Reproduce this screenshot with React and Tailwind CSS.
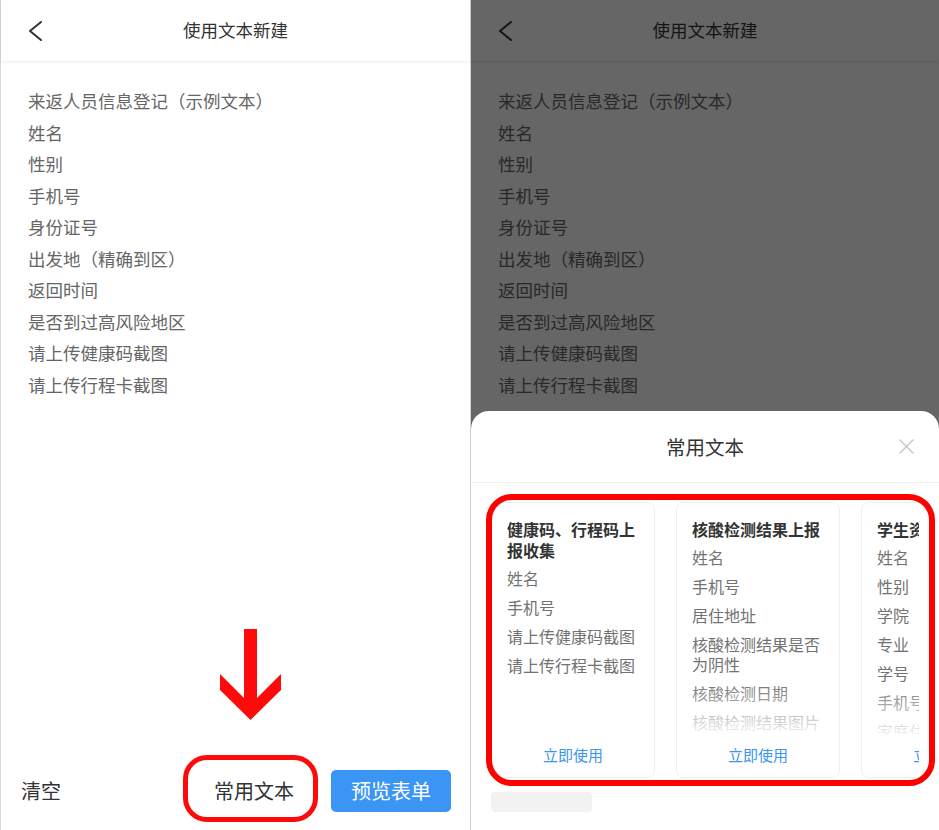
const FIELDS = [
  "来返人员信息登记（示例文本）",
  "姓名",
  "性别",
  "手机号",
  "身份证号",
  "出发地（精确到区）",
  "返回时间",
  "是否到过高风险地区",
  "请上传健康码截图",
  "请上传行程卡截图",
];

const TEMPLATES = [
  {
    title: "健康码、行程码上报收集",
    items: ["姓名", "手机号", "请上传健康码截图", "请上传行程卡截图"],
  },
  {
    title: "核酸检测结果上报",
    items: ["姓名", "手机号", "居住地址", "核酸检测结果是否为阴性", "核酸检测日期", "核酸检测结果图片"],
  },
  {
    title: "学生资料收集",
    items: ["姓名", "性别", "学院", "专业", "学号", "手机号", "家庭住址"],
  },
];

const Chevron = () => (
  <svg width="16" height="22" viewBox="0 0 16 22" fill="none">
    <path d="M14 2 L3 11 L14 20" stroke="#333" strokeWidth="2" strokeLinecap="round" strokeLinejoin="round" />
  </svg>
);

const CloseIcon = () => (
  <svg width="15" height="15" viewBox="0 0 15 15" fill="none">
    <path d="M1 1 L14 14 M14 1 L1 14" stroke="#c8c8c8" strokeWidth="1.5" strokeLinecap="round" />
  </svg>
);

const RedArrow = () => (
  <svg width="61" height="91" viewBox="0 0 61 91">
    <polygon points="24,0 37,0 37,69 61,45 61,61 30.5,91 0,61 0,45 24,69" fill="#ff0a0a" />
  </svg>
);

const PhonePage = () => (
  <div className="flex flex-col h-full">
    <div className="h-[61px] grid grid-cols-[1fr_auto_1fr] items-center shadow-[0_1px_3px_rgba(0,0,0,0.09)] bg-white">
      <div className="pl-[26px]">
        <Chevron />
      </div>
      <div className="text-[17.5px] text-[#333]">使用文本新建</div>
      <div />
    </div>
    <div className="flex-1 pt-[24px] pl-[27px] text-[17.5px] leading-[31.5px] text-[#666]">
      {FIELDS.map((f) => (
        <div key={f}>{f}</div>
      ))}
    </div>
    <div className="h-[78px] flex items-center pl-[20px] pr-[19px]">
      <span className="text-[20px] text-[#333]">清空</span>
      <span className="ml-auto mr-[37px] text-[20px] text-[#333]">常用文本</span>
      <button className="w-[120px] h-[42px] rounded-[5px] bg-[#3a95f5] text-white text-[20px]">
        预览表单
      </button>
    </div>
  </div>
);

const TemplateCard = ({ tpl }) => (
  <div className="shrink-0 w-[164px] h-[276px] border border-[#eee] rounded-[7px] bg-white flex flex-col pt-4 px-[15px] pb-3">
    <div className="text-[16px] leading-[21px] font-bold text-[#333] mb-[7px]">{tpl.title}</div>
    <div className="flex-1 min-h-0 overflow-hidden relative">
      <div className="flex flex-col gap-[9px]">
        {tpl.items.map((it) => (
          <div key={it} className="text-[16px] leading-[20px] text-[#727272]">
            {it}
          </div>
        ))}
      </div>
      <div className="absolute left-0 right-0 bottom-0 h-[52px] bg-gradient-to-b from-white/0 to-white/90" />
    </div>
    <div className="mt-[11px] text-center text-[15px] leading-[20px] text-[#3a95f5]">立即使用</div>
  </div>
);

export default function App() {
  return (
    <div className="flex w-[939px] h-[830px] overflow-hidden bg-white font-['Noto_Sans_CJK_SC','Noto_Sans',sans-serif]">
      {/* left: editor page */}
      <div className="relative w-[470px] h-full border-l border-[#d8d8d8]">
        <PhonePage />
        <div className="absolute left-[219px] top-[629px]">
          <RedArrow />
        </div>
        <div className="absolute left-[182px] top-[755px] w-[135px] h-[67px] border-[5px] border-[#ff0a0a] rounded-[24px]" />
      </div>

      {/* right: same page with the template sheet open */}
      <div className="relative w-[469px] h-full border-l border-[#d0d0d0]">
        <PhonePage />
        <div className="absolute inset-0 bg-black/60" />
        <div className="absolute left-0 right-0 bottom-0 h-[419px] bg-white rounded-t-[18px] flex flex-col">
          <div className="h-[72px] shrink-0 grid grid-cols-[1fr_auto_1fr] items-center border-b border-[#eee]">
            <div />
            <div className="text-[19.5px] text-[#333]">常用文本</div>
            <div className="flex justify-end pr-[25px]">
              <CloseIcon />
            </div>
          </div>
          <div className="mx-5 mt-[19px] overflow-hidden">
            <div className="flex gap-[21px]">
              {TEMPLATES.map((t) => (
                <TemplateCard key={t.title} tpl={t} />
              ))}
            </div>
          </div>
          <div className="ml-5 mt-[14px] w-[101px] h-[20px] rounded-[4px] bg-[#f2f2f2]" />
        </div>
        <div className="absolute left-[15px] top-[494px] w-[449px] h-[292px] border-[6px] border-[#ff0000] rounded-[26px]" />
      </div>
    </div>
  );
}
